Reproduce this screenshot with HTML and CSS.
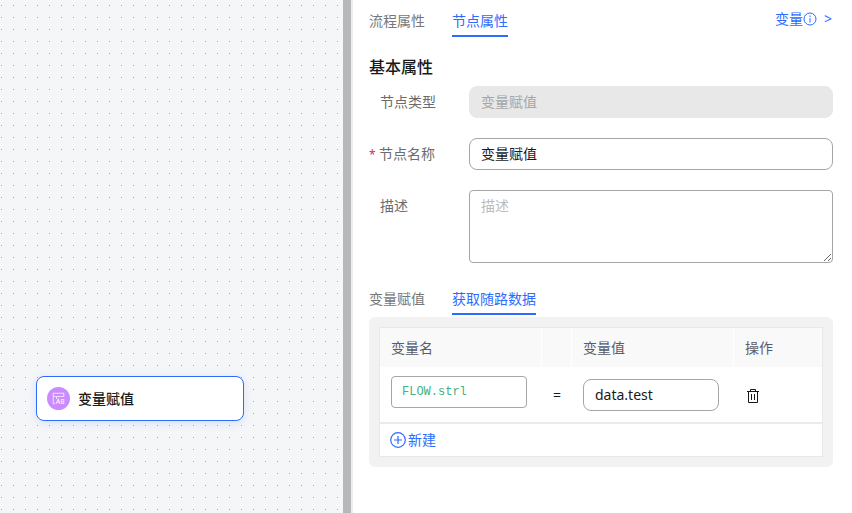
FILE: index.html
```html
<!DOCTYPE html>
<html lang="zh-CN">
<head>
<meta charset="utf-8">
<meta name="viewport" content="width=device-width, initial-scale=1">
<title>节点属性</title>
<link rel="stylesheet" href="styles.css">
</head>
<body>
<div class="editor">
  <main class="canvas">
    <div class="node">
      <svg class="node-icon" viewBox="0 0 24 24" aria-hidden="true">
        <circle cx="12" cy="12" r="12" fill="#c98bff"/>
        <g fill="none" stroke="#f1deff" stroke-width="1.1">
          <path d="M6.500 17.500V6.500H17.500V10H6.500M10 10V12.500M6.500 17.500H8.500"/>
          <path d="M9.500 17.500L11.800 12.500L13.500 17.500M10.300 15.800H13M15 12.500V17.500M17.500 12.500V17.500M15 13H17.500M15 15.200H17.500M15 17.300H17.500"/>
        </g>
      </svg>
      <span>变量赋值</span>
    </div>
  </main>
  <div class="splitter"></div>
  <aside class="panel">
    <header class="panel-head">
      <nav class="tabs">
        <button class="tab" type="button">流程属性</button>
        <button class="tab active" type="button">节点属性</button>
      </nav>
      <a class="vars-link" href="#variables">变量<svg class="info" viewBox="0 0 14 14" aria-hidden="true"><g fill="none" stroke="currentColor"><circle cx="7" cy="7" r="6"/><path d="M7 6V10.500M7 3.500V5"/></g></svg><span class="arrow">&gt;</span></a>
    </header>
    <h2 class="title">基本属性</h2>
    <form class="fields">
      <label class="label" for="type">节点类型</label>
      <input class="control" id="type" value="变量赋值" disabled>
      <label class="label required" for="name">节点名称</label>
      <input class="control" id="name" value="变量赋值">
      <label class="label" for="desc">描述</label>
      <textarea class="control area" id="desc" placeholder="描述"></textarea>
    </form>
    <nav class="tabs">
      <button class="tab" type="button">变量赋值</button>
      <button class="tab active" type="button">获取随路数据</button>
    </nav>
    <section class="box">
      <table class="grid">
        <colgroup><col class="col-name"><col class="col-eq"><col class="col-value"><col></colgroup>
        <thead>
          <tr><th>变量名</th><th></th><th>变量值</th><th>操作</th></tr>
        </thead>
        <tbody>
          <tr>
            <td class="cell-name"><input class="control code" aria-label="变量名" value="FLOW.strl"></td>
            <td class="cell-eq">=</td>
            <td><input class="control value" aria-label="变量值" value="data.test"></td>
            <td>
              <button class="delete" type="button" aria-label="删除">
                <svg viewBox="0 0 14 16" aria-hidden="true"><g fill="none" stroke="currentColor"><path d="M1 4.500H13M4.500 4.500V2.500H9.500V4.500M2.500 4.500V15.500H11.500V4.500M5.500 7V13M8.500 7V13"/></g></svg>
              </button>
            </td>
          </tr>
        </tbody>
        <tfoot>
          <tr>
            <td colspan="4">
              <button class="add" type="button"><svg viewBox="0 0 16 16" aria-hidden="true"><g fill="none" stroke="currentColor" stroke-width="1.200"><circle cx="8" cy="8" r="7.300"/><path d="M8 4V12M4 8H12"/></g></svg>新建</button>
            </td>
          </tr>
        </tfoot>
      </table>
    </section>
  </aside>
</div>
</body>
</html>
```
FILE: styles.css
```css
* {
  box-sizing: border-box;
}

body {
  margin: 0;
  background: #fff;
  color: #191919;
  font: 14px/20px "Noto Sans", "Noto Sans CJK SC", sans-serif;
}

button,
input,
textarea {
  margin: 0;
  font: inherit;
  color: inherit;
}

button {
  padding: 0;
  border: 0;
  background: none;
  cursor: pointer;
}

.editor {
  display: grid;
  grid-template-columns: minmax(0, 343fr) 10px minmax(0, 499fr);
  min-height: 100vh;
}

.canvas {
  position: relative;
  background: #f5f6f8 conic-gradient(at 1px 1px, transparent 270deg, #a4a5a8 0) 1px 5px / 12px 12px;
}

.node {
  position: absolute;
  left: 36px;
  top: 376px;
  display: flex;
  align-items: center;
  gap: 8px;
  width: 208px;
  height: 45px;
  padding: 0 10px;
  border: 1px solid #2e6bff;
  border-radius: 8px;
  background: #fff;
  box-shadow: 0 2px 10px rgba(46, 107, 255, 0.15);
  font-weight: 500;
}

.node-icon {
  width: 23px;
  height: 23px;
}

.splitter {
  border-right: 2px solid #eee;
  background: #b8b8b8;
}

.panel {
  padding: 5px 19px 20px 16px;
}

.panel-head {
  display: flex;
  justify-content: space-between;
  align-items: flex-start;
}

.tabs {
  display: flex;
  gap: 27px;
}

.tab {
  height: 32px;
  padding-top: 2px;
  border-bottom: 2px solid transparent;
  color: #777;
  line-height: 28px;
}

.tab.active {
  border-color: #2e6bff;
  color: #2e6bff;
}

.vars-link {
  display: flex;
  align-items: center;
  padding-right: 1px;
  color: #2e6bff;
  line-height: 28px;
  text-decoration: none;
}

.info {
  width: 14px;
  height: 14px;
}

.arrow {
  margin-left: 7px;
}

.title {
  margin: 18px 0 7px;
  font-size: 16px;
  font-weight: 500;
  line-height: 24px;
}

.fields {
  display: grid;
  grid-template-columns: 100px minmax(0, 1fr);
  row-gap: 20px;
  margin-bottom: 20px;
}

.label {
  padding-left: 11px;
  color: #6c6c6c;
  line-height: 32px;
}

.required {
  padding-left: 0;
}

.required::before {
  content: "*";
  display: inline-block;
  width: 10px;
  color: #d0305c;
  font-size: 12px;
  line-height: 12px;
}

.control {
  display: block;
  width: 100%;
  height: 32px;
  padding: 0 11px 2px;
  border: 1px solid #a6a6a6;
  border-radius: 8px;
  outline: 0;
  background: #fff;
}

.control:disabled {
  border-color: #e8e8e8;
  background: #e8e8e8;
  color: #a6a6a6;
}

.area {
  height: 73px;
  padding: 5px 11px;
  border-radius: 4px;
  resize: vertical;
}

.area::placeholder {
  color: #bbb;
}

.box {
  margin-top: 2px;
  padding: 10px;
  border-radius: 6px;
  background: #f2f2f2;
}

.grid {
  width: 100%;
  table-layout: fixed;
  border: 1px solid #e8e8e8;
  border-collapse: separate;
  border-spacing: 0;
  background: #fff;
}

.col-name,
.col-value {
  width: 162px;
}

.col-eq {
  width: 30px;
}

.grid th {
  height: 39px;
  padding: 0 11px;
  border-right: 1px solid #fff;
  background: #f9f9f9;
  color: #575d6c;
  font-weight: 400;
  text-align: left;
}

.grid th:last-child {
  border-right: 0;
}

.grid tbody td {
  height: 57px;
  padding: 0 11px;
  border-bottom: 2px solid #ebebeb;
}

.grid .cell-name {
  padding-top: 9px;
  vertical-align: top;
}

.grid .cell-eq {
  padding: 0;
  text-align: center;
}

.control.code,
.control.value {
  width: 136px;
}

.control.value {
  padding-bottom: 0;
}

.control.code {
  padding: 0 10px;
  border-radius: 4px;
  color: #42b17f;
  font: 12px/20px "Liberation Mono", monospace;
}

.delete {
  display: block;
  width: 18px;
  height: 18px;
  padding: 1px;
}

.delete svg {
  display: block;
  width: 14px;
  height: 16px;
}

.grid tfoot td {
  height: 32px;
  padding: 0 10px;
}

.add {
  display: flex;
  align-items: center;
  gap: 2px;
  color: #2e6bff;
}

.add svg {
  width: 16px;
  height: 16px;
}
```
